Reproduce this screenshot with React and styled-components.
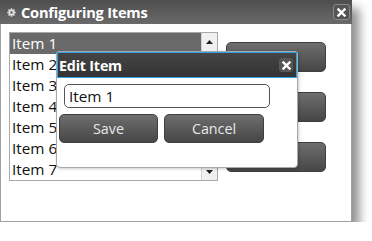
import React from "react";
import styled, { createGlobalStyle } from "styled-components";

const Global = createGlobalStyle`
  html, body { margin: 0; padding: 0; background: #fff; }
  body { font-family: "Open Sans", "Noto Sans", sans-serif; }
  * { box-sizing: border-box; }
`;

const Window = styled.div`
  position: relative;
  width: 352px;
  height: 222px;
  background: #fff;
  border: 1px solid #a0a0a0;
  border-top: none;
  box-shadow: 7px 8px 10px rgba(0, 0, 0, 0.45);
`;

const Header = styled.div`
  height: 24px;
  display: flex;
  align-items: center;
  padding: 0 2px 0 7px;
  background: linear-gradient(#4e4e4e, #6a6a6a);
  color: #fff;
  margin: 0 -1px;
`;

const Title = styled.div`
  flex: 1;
  font-weight: 700;
  font-size: 14.6px;
  margin-left: 5px;
  letter-spacing: -0.2px;
`;

const CloseBtn = styled.div`
  width: ${(p) => p.$w}px;
  height: ${(p) => p.$h}px;
  border-radius: 3px;
  border: 1px solid ${(p) => p.$border};
  background: ${(p) => p.$bg};
  display: flex;
  align-items: center;
  justify-content: center;
`;

const Body = styled.div`
  display: flex;
  gap: 8px;
  padding: 8px 8px;
`;

const ListBox = styled.div`
  width: 209px;
  height: 149px;
  border: 1px solid #a8a8a8;
  display: flex;
`;

const List = styled.div`
  flex: 1;
  display: flex;
  flex-direction: column;
`;

const Row = styled.div`
  height: 21px;
  line-height: 21px;
  padding-left: 2px;
  font-size: 15.3px;
  color: ${(p) => (p.$sel ? "#fff" : "#111")};
  background: ${(p) => (p.$sel ? "#6a6a6a" : "transparent")};
`;

const ScrollBar = styled.div`
  width: 16px;
  display: flex;
  flex-direction: column;
  border-left: 1px solid #d0d0d0;
`;

const Arrow = styled.div`
  height: 17px;
  background: #f0f0f0;
  display: flex;
  align-items: center;
  justify-content: center;
`;

const Track = styled.div`
  flex: 1;
  background: #fafafa;
`;

const SideButtons = styled.div`
  display: flex;
  flex-direction: column;
  gap: 20px;
  margin-top: 10px;
`;

const DarkButton = styled.div`
  width: ${(p) => p.$w}px;
  height: ${(p) => p.$h}px;
  border-radius: 5px;
  border: 1px solid #3f3f3f;
  background: linear-gradient(#6e6e6e, #464646);
  color: #e8e8e8;
  font-size: 14.3px;
  display: flex;
  align-items: center;
  justify-content: center;
`;

const Dialog = styled.div`
  position: absolute;
  left: 55px;
  top: 51px;
  width: 242px;
  height: 117px;
  background: #fff;
  border: 1px solid #a8a8a8;
  border-radius: 3px 3px 4px 4px;
  box-shadow: 1px 1px 3px rgba(0, 0, 0, 0.2);
`;

const DialogHeader = styled.div`
  height: 26px;
  border: 1px solid #2ba3e6;
  background: linear-gradient(#454545, #333);
  display: flex;
  align-items: center;
  padding: 0 3px 0 1px;
  color: #fff;
`;

const DialogTitle = styled.div`
  flex: 1;
  font-weight: 700;
  font-size: 14.3px;
  letter-spacing: -0.2px;
`;

const Input = styled.div`
  margin: 6px 0 0 7px;
  width: 206px;
  height: 24px;
  border: 1px solid #555;
  border-radius: 5px;
  font-size: 15.3px;
  line-height: 22px;
  padding-left: 4px;
  color: #111;
`;

const ButtonRow = styled.div`
  display: flex;
  gap: 6px;
  margin: 6px 0 0 2px;
`;

const X = () => (
  <svg width="9" height="9" viewBox="0 0 9 9">
    <path d="M1.5 1.5 L7.5 7.5 M7.5 1.5 L1.5 7.5" stroke="#fff" strokeWidth="2.4" strokeLinecap="square" />
  </svg>
);

const Gear = () => (
  <svg width="9" height="9" viewBox="0 0 10 10">
    <g fill="#e0e0e0">
      <circle cx="5" cy="5" r="3.2" />
      <rect x="4.1" y="0.3" width="1.8" height="9.4" />
      <rect x="0.3" y="4.1" width="9.4" height="1.8" />
      <rect x="4.1" y="0.3" width="1.8" height="9.4" transform="rotate(45 5 5)" />
      <rect x="4.1" y="0.3" width="1.8" height="9.4" transform="rotate(-45 5 5)" />
    </g>
    <circle cx="5" cy="5" r="1.3" fill="#5a5a5a" />
  </svg>
);

const Tri = ({ up }) => (
  <svg width="7" height="4" viewBox="0 0 7 4">
    <path d={up ? "M0 4 L3.5 0 L7 4 Z" : "M0 0 L7 0 L3.5 4 Z"} fill="#222" />
  </svg>
);

const items = ["Item 1", "Item 2", "Item 3", "Item 4", "Item 5", "Item 6", "Item 7"];

export default function App() {
  return (
    <>
      <Global />
      <Window>
        <Header>
          <Gear />
          <Title>Configuring Items</Title>
          <CloseBtn $w={17} $h={16} $border="#8a8a8a" $bg="#555">
            <X />
          </CloseBtn>
        </Header>
        <Body>
          <ListBox>
            <List>
              {items.map((t, i) => (
                <Row key={t} $sel={i === 0}>
                  {t}
                </Row>
              ))}
            </List>
            <ScrollBar>
              <Arrow>
                <Tri up />
              </Arrow>
              <Track />
              <Arrow>
                <Tri />
              </Arrow>
            </ScrollBar>
          </ListBox>
          <SideButtons>
            <DarkButton $w={100} $h={30} />
            <DarkButton $w={100} $h={30} />
            <DarkButton $w={100} $h={30} />
          </SideButtons>
        </Body>
        <Dialog>
          <DialogHeader>
            <DialogTitle>Edit Item</DialogTitle>
            <CloseBtn $w={14} $h={14} $border="#5a5a5a" $bg="#555">
              <X />
            </CloseBtn>
          </DialogHeader>
          <Input>Item 1</Input>
          <ButtonRow>
            <DarkButton $w={99} $h={29}>Save</DarkButton>
            <DarkButton $w={100} $h={29}>Cancel</DarkButton>
          </ButtonRow>
        </Dialog>
      </Window>
    </>
  );
}
